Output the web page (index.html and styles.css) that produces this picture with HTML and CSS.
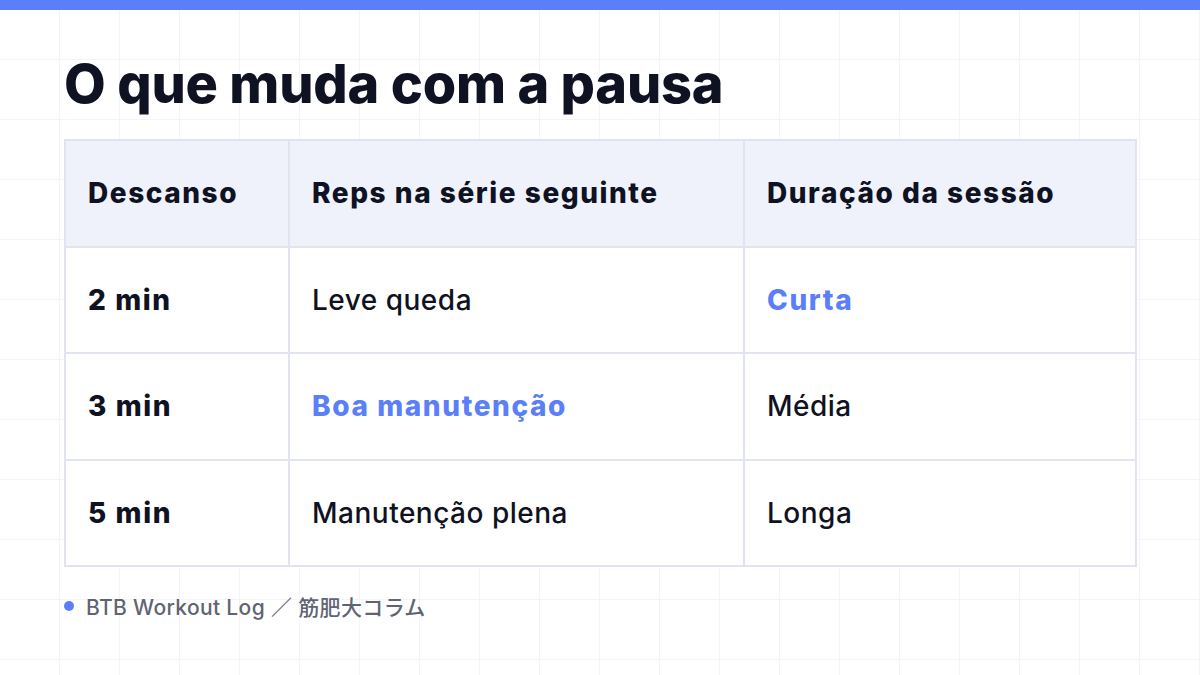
FILE: index.html
```html
<!DOCTYPE html>
<html lang="pt">
<head>
<meta charset="UTF-8" />
<meta name="viewport" content="width=device-width, initial-scale=1" />
<title>O que muda com a pausa</title>
<link rel="stylesheet" href="styles.css">
</head>
<body>
  <div class="top-bar"></div>
  <main class="slide">
    <h1 class="title">O que muda com a pausa</h1>

    <table class="rest-table">
      <colgroup>
        <col class="col-rest">
        <col class="col-reps">
        <col class="col-time">
      </colgroup>
      <thead>
        <tr>
          <th>Descanso</th>
          <th>Reps na série seguinte</th>
          <th>Duração da sessão</th>
        </tr>
      </thead>
      <tbody>
        <tr>
          <td class="rest">2 min</td>
          <td>Leve queda</td>
          <td class="accent">Curta</td>
        </tr>
        <tr>
          <td class="rest">3 min</td>
          <td class="accent">Boa manutenção</td>
          <td>Média</td>
        </tr>
        <tr>
          <td class="rest">5 min</td>
          <td>Manutenção plena</td>
          <td>Longa</td>
        </tr>
      </tbody>
    </table>

    <div class="source">
      <span class="dot"></span>
      <span>BTB Workout Log ／ 筋肥大コラム</span>
    </div>
  </main>
</body>
</html>
```

FILE: styles.css
```css
html, body {
  margin: 0;
  padding: 0;
}
body {
  font-family: Inter, "Noto Sans CJK JP", sans-serif;
  color: #0f1222;
  width: 1200px;
  height: 675px;
  overflow: hidden;
  background-color: #fff;
  background-image:
    linear-gradient(to right, #f3f4f8 1px, transparent 1px),
    linear-gradient(to bottom, #f3f4f8 1px, transparent 1px);
  background-size: 60px 60px;
  background-position: -1px -1px;
}
.top-bar {
  height: 10px;
  background: #5b7ff8;
}
.slide {
  padding: 0 64px;
}
.title {
  margin: 0;
  padding-top: 44px;
  height: 85px;
  font-size: 54px;
  font-weight: 800;
  letter-spacing: -0.2px;
  line-height: 60px;
}
.rest-table {
  width: 1071px;
  border-collapse: collapse;
  border: 2px solid #e1e4f0;
  background: #fff;
  table-layout: fixed;
}
.col-rest { width: 224px; }
.col-reps { width: 455px; }
.col-time { width: 392px; }
.rest-table th,
.rest-table td {
  border: 2px solid #e1e4f0;
  height: 106.6px;
  padding: 0 0 0 22px;
  text-align: left;
  font-size: 28px;
  box-sizing: border-box;
}
.rest-table th {
  background: #f0f2fb;
  font-weight: 800;
  letter-spacing: 1.55px;
}
.rest-table td {
  font-weight: 500;
  letter-spacing: 0.5px;
}
.rest-table td.rest,
.rest-table td.accent {
  font-weight: 800;
  letter-spacing: 1.6px;
}
.rest-table td.accent {
  color: #5b7ff8;
}
.source {
  display: flex;
  align-items: center;
  gap: 12px;
  margin-top: 24px;
  font-size: 21px;
  font-weight: 500;
  letter-spacing: 0.35px;
  color: #5f6473;
}
.dot {
  width: 10px;
  height: 10px;
  border-radius: 50%;
  background: #5b7ff8;
}
```
